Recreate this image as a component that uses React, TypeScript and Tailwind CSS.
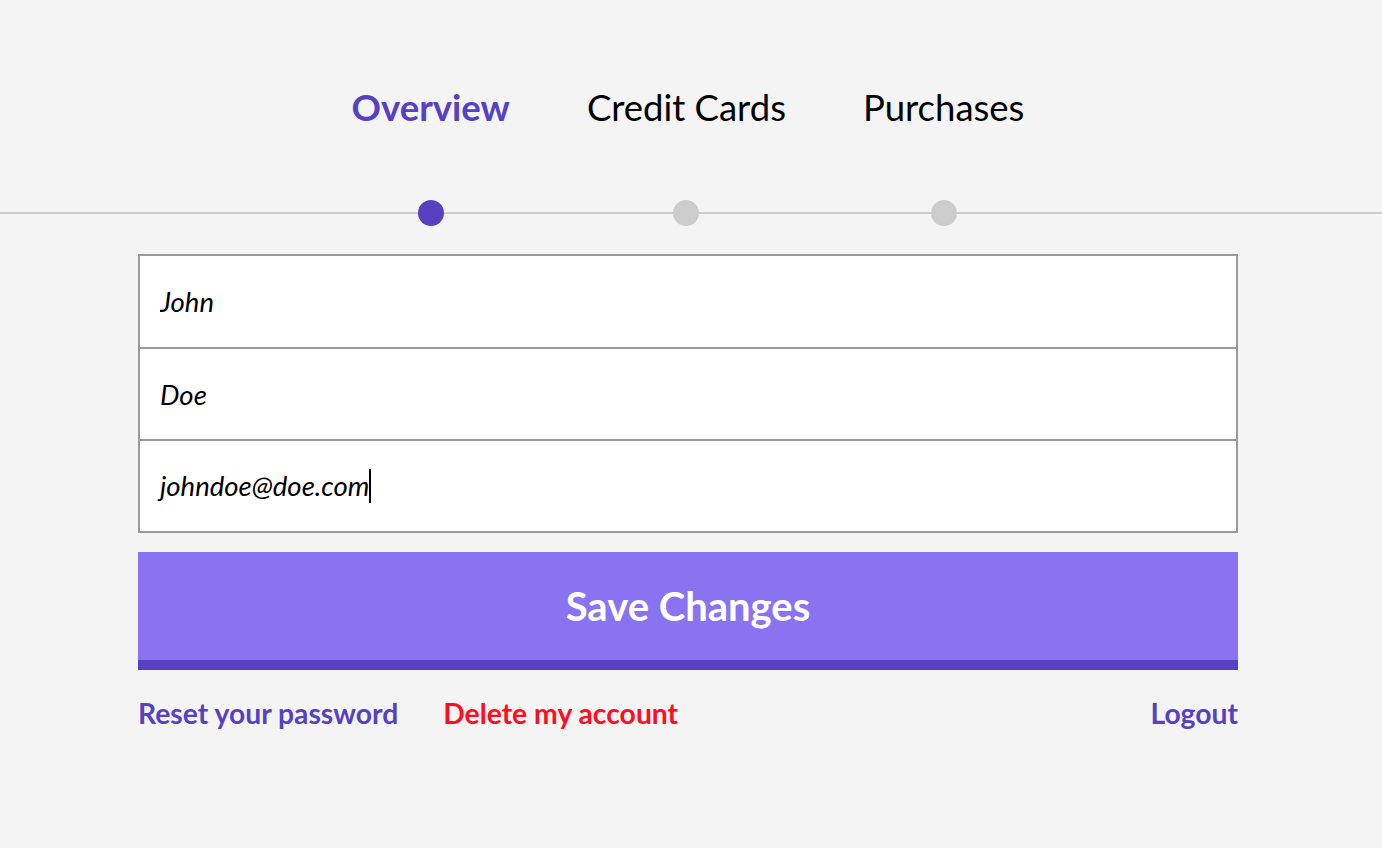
const tabs = ['Overview', 'Credit Cards', 'Purchases'];

export default function App() {
  const active = 0;

  return (
    <div
      className="min-h-screen w-full bg-[#f4f4f4]"
      style={{ fontFamily: 'Lato, "Open Sans", sans-serif' }}
    >
      <nav className="relative pt-[85px]">
        <div className="absolute left-0 right-0 top-[212px] h-[2px] bg-[#cccccc]" />
        <ul className="relative ml-[138px] flex w-[1100px] justify-center gap-[77px]">
          {tabs.map((t, i) => (
            <li key={t} className="flex flex-col items-center">
              <span
                className={
                  'text-[36.5px] leading-[44px] ' +
                  (i === active ? 'font-bold text-[#5741c0]' : 'font-normal text-black')
                }
              >
                {t}
              </span>
              <span
                className={
                  'mt-[71px] h-[26px] w-[26px] rounded-full ' +
                  (i === active ? 'bg-[#5741c0]' : 'bg-[#cccccc]')
                }
              />
            </li>
          ))}
        </ul>
      </nav>

      <form className="ml-[138px] mt-[28px] w-[1100px]" onSubmit={(e) => e.preventDefault()}>
        <div className="flex flex-col border-2 border-[#999999] bg-white">
          <input
            defaultValue="John"
            className="h-[91px] px-[20px] text-[27.5px] italic text-black outline-none"
          />
          <input
            defaultValue="Doe"
            className="h-[92px] border-t-2 border-[#999999] px-[20px] text-[27.5px] italic text-black outline-none"
          />
          <div className="flex h-[92px] items-center border-t-2 border-[#999999] px-[20px]">
            <span className="text-[27.5px] italic text-black">johndoe@doe.com</span>
            <span className="h-[34px] w-[2px] bg-black" />
          </div>
        </div>

        <button
          type="submit"
          className="mt-[19px] flex h-[118px] w-full items-center justify-center border-b-[10px] border-[#5741c0] bg-[#8a73f0] text-[40px] font-bold text-white"
        >
          Save Changes
        </button>

        <div className="mt-[22px] flex items-center text-[28.3px] font-bold">
          <a href="#" className="text-[#5741c0]">Reset your password</a>
          <a href="#" className="ml-[45px] text-[#ff0d20]">Delete my account</a>
          <a href="#" className="ml-auto text-[#5741c0]">Logout</a>
        </div>
      </form>
    </div>
  );
}
